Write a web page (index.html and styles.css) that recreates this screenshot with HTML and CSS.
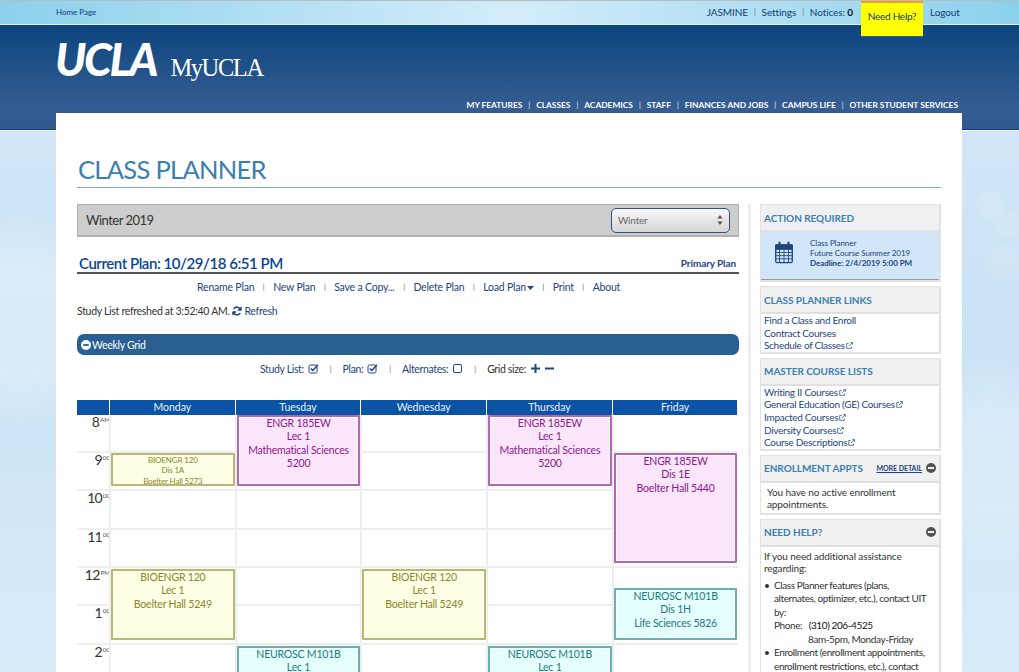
FILE: index.html
```html
<!DOCTYPE html>
<html lang="en">
<head>
<meta charset="utf-8">
<title>Class Planner</title>
<link rel="stylesheet" href="styles.css">
</head>
<body>
<div class="topbar">
  <a class="home">Home Page</a>
  <div class="userbar">
    <a>JASMINE</a><i class="sep">|</i><a>Settings</a><i class="sep">|</i><a>Notices: <b>0</b></a>
    <a class="needhelp">Need Help?</a>
    <a class="logout">Logout</a>
  </div>
</div>
<header class="masthead">
  <div class="brand"><span class="ucla">UCLA</span><span class="myucla">MyUCLA</span></div>
  <nav class="mainnav">
    <a>MY FEATURES</a><i>|</i><a>CLASSES</a><i>|</i><a>ACADEMICS</a><i>|</i><a>STAFF</a><i>|</i><a>FINANCES AND JOBS</a><i>|</i><a>CAMPUS LIFE</a><i>|</i><a>OTHER STUDENT SERVICES</a>
  </nav>
</header>
<main class="card">
  <h1 class="title">CLASS PLANNER</h1>
  <div class="columns">
    <section class="planner">
      <div class="termbar">
        <span>Winter 2019</span>
        <div class="select"><span>Winter</span><svg width="6" height="10" viewBox="0 0 6 10"><path d="M3 0l2.6 3.6H.4zM3 10L.4 6.400h5.200z" fill="#555"/></svg></div>
      </div>
      <div class="planhead">
        <h2>Current Plan: 10/29/18 6:51 PM</h2>
        <a>Primary Plan</a>
      </div>
      <div class="planlinks">
        <a>Rename Plan</a><i class="sep">|</i><a>New Plan</a><i class="sep">|</i><a>Save a Copy...</a><i class="sep">|</i><a>Delete Plan</a><i class="sep">|</i><a>Load Plan<svg class="caret" width="7" height="4" viewBox="0 0 7 4"><path d="M0 0h7L3.500 4z" fill="#1d4583"/></svg></a><i class="sep">|</i><a>Print</a><i class="sep">|</i><a>About</a>
      </div>
      <p class="refreshed">Study List refreshed at 3:52:40 AM. <svg width="10" height="10" viewBox="0 0 12 12" fill="none" stroke="#1d4583" stroke-width="1.800"><path d="M10.500 4.500A4.800 4.800 0 0 0 2 3.500"/><path d="M1.500 7.500A4.800 4.800 0 0 0 10 8.500"/><path d="M11 1v4H7M1 11V7h4" stroke-width="1.200" fill="#1d4583"/></svg> <a>Refresh</a></p>
      <div class="gridbar"><svg width="10" height="10" viewBox="0 0 11 11"><circle cx="5.500" cy="5.500" r="5.500" fill="#fff"/><rect x="2.500" y="4.500" width="6" height="2" fill="#2a5f92"/></svg>Weekly Grid</div>
      <div class="filters">
        <a>Study List:</a>
        <svg class="cb" width="11" height="11" viewBox="0 0 11 11" fill="none" stroke="#1d4583"><rect x="1" y="2" width="8" height="8" rx="1.500"/><path d="M2.800 5.500l2 2L10 1.800" stroke-width="1.500"/></svg>
        <i class="sep">|</i><a>Plan:</a>
        <svg class="cb" width="11" height="11" viewBox="0 0 11 11" fill="none" stroke="#1d4583"><rect x="1" y="2" width="8" height="8" rx="1.500"/><path d="M2.800 5.500l2 2L10 1.800" stroke-width="1.500"/></svg>
        <i class="sep">|</i><a>Alternates:</a>
        <svg class="cb" width="11" height="11" viewBox="0 0 11 11" fill="none" stroke="#1d4583"><rect x="1.500" y="1.500" width="8" height="8" rx="1.500"/></svg>
        <i class="sep">|</i><span>Grid size:</span>
        <svg class="gs" width="9" height="9" viewBox="0 0 9 9"><path d="M3.500 0h2v3.500H9v2H5.500V9h-2V5.500H0v-2h3.500z" fill="#1d4583"/></svg>
        <svg class="gs" width="9" height="9" viewBox="0 0 9 9"><rect y="3.500" width="9" height="2" fill="#1d4583"/></svg>
      </div>
      <div class="calendar">
        <div class="hours">
          <div class="corner"></div>
          <div class="hour"><span>8</span><sup>AM</sup></div>
          <div class="hour"><span>9</span><sup>00</sup></div>
          <div class="hour"><span>10</span><sup>00</sup></div>
          <div class="hour"><span>11</span><sup>00</sup></div>
          <div class="hour"><span>12</span><sup>PM</sup></div>
          <div class="hour"><span>1</span><sup>00</sup></div>
          <div class="hour"><span>2</span><sup>00</sup></div>
        </div>
        <div class="day">
          <div class="dayname">Monday</div>
          <div class="slots"><div></div><div></div><div></div><div></div><div></div><div></div><div></div>
            <div class="event olive small" style="top:38px;height:33px">BIOENGR 120<br>Dis 1A<br>Boelter Hall 5273</div>
            <div class="event olive" style="top:154px;height:71px">BIOENGR 120<br>Lec 1<br>Boelter Hall 5249</div>
          </div>
        </div>
        <div class="day">
          <div class="dayname">Tuesday</div>
          <div class="slots"><div></div><div></div><div></div><div></div><div></div><div></div><div></div>
            <div class="event purple" style="top:0;height:71px">ENGR 185EW<br>Lec 1<br>Mathematical Sciences<br>5200</div>
            <div class="event teal" style="top:231px;height:72px">NEUROSC M101B<br>Lec 1</div>
          </div>
        </div>
        <div class="day">
          <div class="dayname">Wednesday</div>
          <div class="slots"><div></div><div></div><div></div><div></div><div></div><div></div><div></div>
            <div class="event olive" style="top:154px;height:71px">BIOENGR 120<br>Lec 1<br>Boelter Hall 5249</div>
          </div>
        </div>
        <div class="day">
          <div class="dayname">Thursday</div>
          <div class="slots"><div></div><div></div><div></div><div></div><div></div><div></div><div></div>
            <div class="event purple" style="top:0;height:71px">ENGR 185EW<br>Lec 1<br>Mathematical Sciences<br>5200</div>
            <div class="event teal" style="top:231px;height:72px">NEUROSC M101B<br>Lec 1</div>
          </div>
        </div>
        <div class="day">
          <div class="dayname">Friday</div>
          <div class="slots"><div></div><div></div><div></div><div></div><div></div><div></div><div></div>
            <div class="event purple" style="top:38px;height:110px">ENGR 185EW<br>Dis 1E<br>Boelter Hall 5440</div>
            <div class="event teal" style="top:173px;height:52px">NEUROSC M101B<br>Dis 1H<br>Life Sciences 5826</div>
          </div>
        </div>
      </div>
    </section>
    <aside class="side">
      <div class="box action">
        <h3>ACTION REQUIRED</h3>
        <div class="actionbody">
          <svg width="18" height="23" viewBox="0 0 20 24" fill="none" stroke="#1d4583"><rect x=".8" y="3.500" width="18.400" height="19.700" rx="1.500" stroke-width="1.500"/><rect x="1" y="3.500" width="18" height="5" fill="#1d4583"/><path d="M5 1v5M15 1v5" stroke-width="2.400" stroke-linecap="round"/><path d="M1 12h18M1 15.500h18M1 19h18M5 8v15M10 8v15M15 8v15" stroke-width="1"/></svg>
          <div class="actiontext">Class Planner<br>Future Course Summer 2019<br><b>Deadline: 2/4/2019 5:00 PM</b></div>
        </div>
      </div>
      <div class="box">
        <h3>CLASS PLANNER LINKS</h3>
        <ul class="links">
          <li>Find a Class and Enroll</li>
          <li>Contract Courses</li>
          <li>Schedule of Classes<svg class="ext" viewBox="0 0 7 7"><path d="M5.500 4.500v1.800H.7V1.500h2M3 4l3.300-3.300M4.200.6h2.200v2.200" /></svg></li>
        </ul>
      </div>
      <div class="box">
        <h3>MASTER COURSE LISTS</h3>
        <ul class="links">
          <li>Writing II Courses<svg class="ext" viewBox="0 0 7 7"><path d="M5.500 4.500v1.800H.7V1.500h2M3 4l3.300-3.300M4.200.6h2.200v2.200" /></svg></li>
          <li>General Education (GE) Courses<svg class="ext" viewBox="0 0 7 7"><path d="M5.500 4.500v1.800H.7V1.500h2M3 4l3.300-3.300M4.200.6h2.200v2.200" /></svg></li>
          <li>Impacted Courses<svg class="ext" viewBox="0 0 7 7"><path d="M5.500 4.500v1.800H.7V1.500h2M3 4l3.300-3.300M4.200.6h2.200v2.200" /></svg></li>
          <li>Diversity Courses<svg class="ext" viewBox="0 0 7 7"><path d="M5.500 4.500v1.800H.7V1.500h2M3 4l3.300-3.300M4.200.6h2.200v2.200" /></svg></li>
          <li>Course Descriptions<svg class="ext" viewBox="0 0 7 7"><path d="M5.500 4.500v1.800H.7V1.500h2M3 4l3.300-3.300M4.200.6h2.200v2.200" /></svg></li>
        </ul>
      </div>
      <div class="box">
        <h3>ENROLLMENT APPTS<span class="h3right"><a>MORE DETAIL</a><svg width="10" height="10" viewBox="0 0 10 10"><circle cx="5" cy="5" r="5" fill="#555"/><rect x="2" y="4" width="6" height="2" fill="#eee"/></svg></span></h3>
        <p class="boxtext indent">You have no active enrollment appointments.</p>
      </div>
      <div class="box">
        <h3>NEED HELP?<span class="h3right"><svg width="10" height="10" viewBox="0 0 10 10"><circle cx="5" cy="5" r="5" fill="#555"/><rect x="2" y="4" width="6" height="2" fill="#eee"/></svg></span></h3>
        <p class="boxtext">If you need additional assistance regarding:</p>
        <ul class="help">
          <li>Class Planner features (plans,<br>alternates, optimizer, etc.), contact UIT<br>by:<br>Phone:&nbsp;&nbsp;&nbsp;<span class="phone">(310) 206-4525</span><br><span class="hours-line">8am-5pm, Monday-Friday</span></li>
          <li>Enrollment (enrollment appointments,<br>enrollment restrictions, etc.), contact</li>
        </ul>
      </div>
    </aside>
  </div>
</main>
</body>
</html>
```
FILE: styles.css
```css
* { box-sizing: border-box; }
html, body { margin: 0; height: 672px; overflow: hidden; }
body {
  font-family: "Lato", "Liberation Sans", sans-serif;
  font-size: 11px;
  color: #333;
  background-color: #d3e8f8;
  background-image:
    radial-gradient(circle at 990px 205px, rgba(255,255,255,.1) 0 12px, transparent 17px),
    radial-gradient(circle at 1008px 225px, rgba(255,255,255,.08) 0 12px, transparent 16px),
    radial-gradient(circle at 1005px 262px, rgba(255,255,255,.08) 0 16px, transparent 22px),
    radial-gradient(circle at 20px 320px, rgba(255,255,255,.3) 0 50px, transparent 110px),
    radial-gradient(circle at 990px 460px, rgba(255,255,255,.2) 0 50px, transparent 110px),
    linear-gradient(180deg, #d5e9f9, #c9e2f5 50%, #d8ebf9);
}
a { color: inherit; text-decoration: none; }
i { font-style: normal; }

.topbar {
  height: 25px;
  display: flex;
  justify-content: space-between;
  padding: 0 61px 0 56px;
  border-top: 1px solid #b5bdc2;
  border-bottom: 1px solid #e3f3fb;
  background: linear-gradient(90deg, #8bd1ec, #d3ecf9 50%, #8bd1ec);
  color: #153c78;
  position: relative;
  z-index: 2;
}
.home { font-size: 8px; line-height: 23px; }
.userbar { display: flex; align-items: flex-start; font-size: 10px; line-height: 22px; letter-spacing: -.1px; }
.userbar b { color: #111; }
.sep { font-size: 7px; color: #555; margin: 0 6px; }
.needhelp {
  width: 62px;
  height: 36px;
  margin: 0 7px 0 8px;
  background: #ff0;
  border-top: 2px solid #f0a020;
  border-bottom: 1px solid #2a5f92;
  text-align: center;
  font-size: 10px;
  letter-spacing: -.25px;
  line-height: 27px;
  color: #153a80;
}
.logout { width: 28px; white-space: nowrap; }

.masthead {
  height: 105px;
  padding: 12px 61px 0 56px;
  background: linear-gradient(180deg, #0c457f, #355d92 80%, #2f588e);
  border-bottom: 1px solid #123e74;
  box-shadow: 0 1px 0 #fff;
}
.brand { display: flex; align-items: baseline; height: 62px; color: #fff; }
.ucla { font: italic 900 45px/45px "Lato", sans-serif; letter-spacing: -2.3px; margin-left: -1px; }
.myucla { font: 24.5px/26px "Liberation Serif", serif; letter-spacing: -1.4px; margin-left: 14px; }
.mainnav { display: flex; justify-content: flex-end; color: #fff; font-size: 8.4px; font-weight: 700; line-height: 12px; }
.mainnav i { font-size: 7px; font-weight: 400; margin: 0 6px; }

.card {
  width: 906px;
  height: 560px;
  margin: -17px 0 0 56px;
  padding: 44px 21px 0;
  background: #fff;
  position: relative;
}
.title {
  margin: 0;
  height: 31px;
  padding-left: 1px;
  border-bottom: 1px solid #7fb0d2;
  color: #3a7fb0;
  font-size: 25.5px;
  letter-spacing: -.7px;
  font-weight: 400;
  line-height: 24px;
}
.columns { display: flex; margin-top: 16px; }
.planner { width: 662px; flex: none; }
.side { width: 181px; margin-left: 21px; flex: none; position: relative; }
.side::before {
  content: "";
  position: absolute;
  left: -12px;
  top: 0;
  bottom: -100px;
  width: 3px;
  background: #eee;
}

.termbar {
  height: 33px;
  display: flex;
  align-items: center;
  justify-content: space-between;
  padding: 0 8px;
  background: #cdcdcd;
  border: 1px solid #b0b0b0;
  border-bottom-width: 2px;
  font-size: 13px;
  letter-spacing: -.5px;
  color: #333;
}
.select {
  width: 119px;
  height: 25px;
  display: flex;
  align-items: center;
  justify-content: space-between;
  padding: 0 6px;
  border: 1px solid #33507e;
  border-radius: 5px;
  background: linear-gradient(#f7f7f7, #d6d6d6);
  font-size: 10px;
  letter-spacing: -.2px;
  color: #666;
}
.planhead {
  margin-top: 15px;
  height: 22px;
  display: flex;
  justify-content: space-between;
  align-items: flex-end;
  padding: 0 3px 0 2px;
  border-bottom: 2px solid #555;
  color: #1d4583;
}
.planhead h2 { margin: 0; font-size: 15px; letter-spacing: -.45px; line-height: 17px; font-weight: 600; color: #0a4595; }
.planhead a { font-size: 10px; line-height: 18px; font-weight: 700; letter-spacing: -.1px; }
.planlinks {
  margin-top: 6px;
  padding-left: 120px;
  display: flex;
  align-items: center;
  height: 13px;
  color: #1d4583;
  font-size: 10.5px;
  letter-spacing: -.2px;
  white-space: nowrap;
}
.planlinks .sep { margin: 0 8.5px; letter-spacing: 0; }
.caret { margin: 0 0 1px 1px; }
.refreshed { margin: 12px 0 0; line-height: 13px; font-size: 10.5px; letter-spacing: -.3px; color: #333; }
.refreshed a { color: #1d4583; }
.refreshed svg { vertical-align: -1px; }
.gridbar {
  margin-top: 16px;
  height: 21px;
  display: flex;
  align-items: center;
  gap: 1px;
  padding-left: 4px;
  background: #2a5f92;
  border-radius: 7px;
  color: #fff;
  font-size: 10.5px;
  letter-spacing: -.3px;
}
.filters {
  margin-top: 7px;
  height: 13px;
  padding-left: 183px;
  display: flex;
  align-items: center;
  color: #1d4583;
  font-size: 10.5px;
  letter-spacing: -.35px;
  white-space: nowrap;
}
.filters span { color: #333; }
.filters .sep { margin: 0 11px; letter-spacing: 0; }
.cb { margin-left: 4px; }
.gs { margin-left: 5px; }

.calendar { margin-top: 25px; display: flex; height: 300px; }
.hours { width: 33px; flex: none; }
.corner { height: 14.5px; background: #0a53a5; margin-right: 1px; }
.hour {
  height: 38.4px;
  line-height: 14px;
  text-align: right;
  color: #333;
  border-bottom: 2px solid #eee;
}
.hour span { font-size: 14px; letter-spacing: -.8px; margin-right: 1px; }
.hour sup { font-size: 6.5px; letter-spacing: -.2px; line-height: 0; vertical-align: 5px; color: #555; }
.day { width: 125.7px; flex: none; }
.dayname {
  height: 14.5px;
  margin-right: 1px;
  background: #0a53a5;
  color: #eaf1fa;
  text-align: center;
  font-size: 10.5px;
  line-height: 14px;
}
.slots { position: relative; border-left: 2px solid #eee; margin-left: -1px; height: 269px; }
.slots > div:not(.event) { height: 38.4px; border-bottom: 2px solid #eee; }
.event {
  position: absolute;
  left: 0;
  right: 1px;
  overflow: hidden;
  border: 2px solid;
  border-radius: 1px;
  box-shadow: inset 0 0 0 1px #fff;
  text-align: center;
  font-size: 10.5px;
  letter-spacing: -.2px;
  line-height: 13.6px;
}
.purple { background: #fae5fa; border-color: #b565b5; color: #8b1a8b; }
.olive { background: #ffffe6; border-color: #b9b96b; color: #86862c; }
.teal { background: #e5ffff; border-color: #66b2b2; color: #1a7a78; }
.small { font-size: 8px; letter-spacing: -.15px; line-height: 10.5px; }

.box { border: 2px solid #e2e2e2; margin-bottom: 4px; background: #fff; border-width: 1px 2px 2px 1px; }
.box h3 {
  margin: 0;
  height: 27px;
  display: flex;
  justify-content: space-between;
  align-items: center;
  padding: 0 3px;
  background: #f0f0f0;
  border-bottom: 2px solid #e0e0e0;
  color: #3a7fb0;
  font-size: 10px;
  letter-spacing: -.05px;
  font-weight: 700;
}
.h3right { display: flex; align-items: center; gap: 4px; }
.h3right a { color: #1d4583; font-size: 7px; text-decoration: underline; }
.actionbody {
  height: 48px;
  display: flex;
  align-items: flex-start;
  background: #d1e6f8;
  border-bottom: 1px solid #999;
  padding: 9px 0 0 14px;
}
.actiontext { margin-left: 17px; margin-top: -3.5px; font-size: 8px; letter-spacing: -.05px; line-height: 10.4px; color: #1d4583; }
.links { list-style: none; margin: 0; padding: 0 0 0 3px; font-size: 10px; letter-spacing: -.28px; line-height: 12.6px; color: #1d4583; white-space: nowrap; }
.ext { width: 7px; height: 7px; margin-left: 1px; fill: none; stroke: #1d4583; stroke-width: .7; }
.boxtext { margin: 0; padding: 3px 3px 2px; font-size: 10px; letter-spacing: -.12px; line-height: 12.5px; color: #333; }
.indent { padding-left: 6px; }
.help { margin: 2px 0 0; padding: 0 0 0 13px; list-style: none; font-size: 10px; letter-spacing: -.4px; line-height: 13.5px; color: #333; white-space: nowrap; }
.help li { position: relative; }
.help li::before { content: ""; position: absolute; left: -9px; top: 5px; width: 4px; height: 4px; border-radius: 50%; background: #333; }
.phone { color: #111; }
.hours-line { margin-left: 34px; }
```
